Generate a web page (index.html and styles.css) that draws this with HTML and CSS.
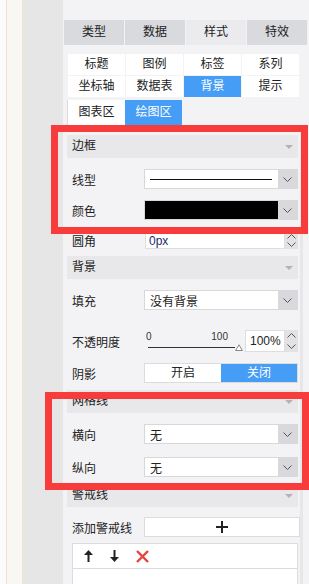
FILE: index.html
```html
<!DOCTYPE html>
<html lang="zh-CN">
<head>
    <meta charset="UTF-8">
    <meta name="viewport" content="width=device-width, initial-scale=1.0">
    <title>图表样式</title>
    <link rel="stylesheet" href="styles.css">
</head>
<body>

<div class="edge"></div>
<div class="rail"></div>
<div class="gutter"></div>

<div class="panel">
    <div class="tabs">
        <div class="tab">类型</div>
        <div class="tab">数据</div>
        <div class="tab active">样式</div>
        <div class="tab">特效</div>
    </div>

    <div class="subtabs">
        <div class="subtab">标题</div>
        <div class="subtab">图例</div>
        <div class="subtab">标签</div>
        <div class="subtab">系列</div>
        <div class="subtab">坐标轴</div>
        <div class="subtab">数据表</div>
        <div class="subtab active">背景</div>
        <div class="subtab">提示</div>
    </div>

    <div class="areas">
        <div class="area first">图表区</div>
        <div class="area active">绘图区</div>
    </div>

    <div class="content">
        <!-- 边框 -->
        <div class="head first">边框<span class="caret"></span></div>
        <div class="row">
            <div class="label">线型</div>
            <div class="select">
                <span class="value"><span class="line-sample"></span></span>
                <span class="drop"><svg width="9" height="5" viewBox="0 0 9 5"><polyline points="0.5,0.5 4.5,4.5 8.5,0.5" fill="none" stroke="#555" stroke-width="1"/></svg></span>
            </div>
        </div>
        <div class="row">
            <div class="label">颜色</div>
            <div class="select">
                <span class="value"><span class="swatch"></span></span>
                <span class="drop"><svg width="9" height="5" viewBox="0 0 9 5"><polyline points="0.5,0.5 4.5,4.5 8.5,0.5" fill="none" stroke="#555" stroke-width="1"/></svg></span>
            </div>
        </div>
        <div class="row small">
            <div class="label">圆角</div>
            <div class="number">
                <span class="num-value px">0px</span>
                <span class="spin">
                    <svg width="9" height="5" viewBox="0 0 9 5"><polyline points="0.5,4.5 4.5,0.5 8.5,4.5" fill="none" stroke="#555" stroke-width="1"/></svg>
                    <svg width="9" height="5" viewBox="0 0 9 5"><polyline points="0.5,0.5 4.5,4.5 8.5,0.5" fill="none" stroke="#555" stroke-width="1"/></svg>
                </span>
            </div>
        </div>

        <!-- 背景 -->
        <div class="head">背景<span class="caret"></span></div>
        <div class="row">
            <div class="label">填充</div>
            <div class="select">
                <span class="value">没有背景</span>
                <span class="drop"><svg width="9" height="5" viewBox="0 0 9 5"><polyline points="0.5,0.5 4.5,4.5 8.5,0.5" fill="none" stroke="#555" stroke-width="1"/></svg></span>
            </div>
        </div>
        <div class="row opacity">
            <div class="label">不透明度</div>
            <div class="slider">
                <div class="scale"><span>0</span><span>100</span></div>
                <div class="track">
                    <span class="track-line"></span>
                    <svg width="8" height="7" viewBox="0 0 8 7"><polygon points="4,0.8 7.4,6.5 0.6,6.5" fill="#fff" stroke="#888" stroke-width="1"/></svg>
                </div>
            </div>
            <div class="number">
                <span class="num-value">100%</span>
                <span class="spin">
                    <svg width="9" height="5" viewBox="0 0 9 5"><polyline points="0.5,4.5 4.5,0.5 8.5,4.5" fill="none" stroke="#555" stroke-width="1"/></svg>
                    <svg width="9" height="5" viewBox="0 0 9 5"><polyline points="0.5,0.5 4.5,4.5 8.5,0.5" fill="none" stroke="#555" stroke-width="1"/></svg>
                </span>
            </div>
        </div>
        <div class="row">
            <div class="label">阴影</div>
            <div class="toggle">
                <span class="opt">开启</span>
                <span class="opt on">关闭</span>
            </div>
        </div>

        <!-- 网格线 -->
        <div class="head">网格线<span class="caret"></span></div>
        <div class="row">
            <div class="label">横向</div>
            <div class="select">
                <span class="value">无</span>
                <span class="drop"><svg width="9" height="5" viewBox="0 0 9 5"><polyline points="0.5,0.5 4.5,4.5 8.5,0.5" fill="none" stroke="#555" stroke-width="1"/></svg></span>
            </div>
        </div>
        <div class="row wide">
            <div class="label">纵向</div>
            <div class="select">
                <span class="value">无</span>
                <span class="drop"><svg width="9" height="5" viewBox="0 0 9 5"><polyline points="0.5,0.5 4.5,4.5 8.5,0.5" fill="none" stroke="#555" stroke-width="1"/></svg></span>
            </div>
        </div>

        <!-- 警戒线 -->
        <div class="head">警戒线<span class="caret"></span></div>
        <div class="row add-row">
            <div class="label">添加警戒线</div>
            <div class="add-btn">
                <svg width="12" height="12" viewBox="0 0 12 12"><rect x="0" y="5" width="12" height="2" fill="#222"/><rect x="5" y="0" width="2" height="12" fill="#222"/></svg>
            </div>
        </div>
        <div class="list">
            <div class="list-tools">
                <svg width="9" height="12" viewBox="0 0 9 12"><polygon points="4.5,0 9,5 0,5" fill="#222"/><rect x="3.5" y="4" width="2" height="8" fill="#222"/></svg>
                <svg width="9" height="12" viewBox="0 0 9 12"><rect x="3.5" y="0" width="2" height="8" fill="#222"/><polygon points="4.5,12 9,7 0,7" fill="#222"/></svg>
                <svg width="13" height="13" viewBox="0 0 13 13"><line x1="1" y1="1" x2="12" y2="12" stroke="#e8433d" stroke-width="2.4"/><line x1="12" y1="1" x2="1" y2="12" stroke="#e8433d" stroke-width="2.4"/></svg>
            </div>
        </div>
    </div>
</div>

<!-- destaque das seções -->
<div class="mark mark-border"></div>
<div class="mark mark-grid"></div>

</body>
</html>
```

FILE: styles.css
```css
body {
    margin: 0;
    height: 584px;
    overflow: hidden;
    display: flex;
    position: relative;
    font-family: "Liberation Sans", "Noto Sans CJK SC", sans-serif;
    font-size: 12px;
    color: #222;
    background-color: #f3f3f5;
}
.edge {
    width: 6px;
    background: #fbfbfb;
}
.rail {
    width: 15px;
    background: #f8f7f3;
    border-left: 1px solid #eee3cf;
    border-right: 1px solid #eee3cf;
}
.gutter {
    width: 40px;
    background: #e6e6e6;
}
.panel {
    width: 246px;
    height: 584px;
    background: #f3f3f5;
    display: flex;
    flex-direction: column;
}

/* abas principais */
.tabs {
    display: flex;
    gap: 1px;
    width: 243px;
    margin: 20px 0 0 1px;
}
.tab {
    flex: 1;
    height: 25px;
    line-height: 25px;
    text-align: center;
    font-size: 12px;
    background: #d9dadd;
}
.tab.active {
    background: #ebebed;
}

.subtabs {
    display: grid;
    grid-template-columns: repeat(4, 57px);
    grid-auto-rows: 21px;
    gap: 1px;
    margin: 9px 0 0 5px;
}
.subtab {
    background: #fff;
    text-align: center;
    line-height: 21px;
}
.subtab.active {
    background: #459df5;
    color: #fff;
}

.areas {
    display: flex;
    margin: 3px 0 0 4px;
}
.area {
    width: 57px;
    height: 25px;
    line-height: 25px;
    text-align: center;
    background: #fff;
}
.area.first {
    border-left: 1px solid #dcdcdc;
}
.area.active {
    background: #459df5;
    color: #fff;
}

/* conteúdo */
.content {
    flex: 1;
    min-height: 0;
    margin-right: 6px;
    border-right: 3px solid #e7e7e9;
    padding: 0 2px 0 4px;
    display: flex;
    flex-direction: column;
}
.head {
    position: relative;
    height: 23px;
    line-height: 23px;
    padding-left: 5px;
    margin-top: 7px;
    background: #e8e8ea;
    flex-shrink: 0;
}
.head.first {
    margin-top: 10px;
}
.caret {
    position: absolute;
    right: 5px;
    top: 10px;
    border-left: 4px solid transparent;
    border-right: 4px solid transparent;
    border-top: 4px solid #b3b3b5;
}

.row {
    display: flex;
    align-items: center;
    height: 20px;
    margin-top: 11px;
    flex-shrink: 0;
}
.row.small {
    height: 17px;
    margin-top: 12px;
}
.row.opacity {
    height: 22px;
    margin-top: 20px;
}
.row.wide {
    margin-top: 13px;
}
.row.add-row {
    margin-top: 10px;
}
.label {
    width: 77px;
    padding-left: 5px;
    box-sizing: border-box;
    flex-shrink: 0;
}

.select {
    flex: 1;
    height: 20px;
    display: flex;
    box-sizing: border-box;
    border: 1px solid #d8d8d8;
    background: #fff;
}
.select .value {
    flex: 1;
    display: flex;
    align-items: center;
    padding-left: 5px;
    min-width: 0;
}
.drop {
    width: 19px;
    background: #d9d9dd;
    display: flex;
    align-items: center;
    justify-content: center;
}
.line-sample {
    flex: 1;
    height: 1px;
    margin-right: 6px;
    background: #111;
}
.select .value:has(.swatch) {
    padding: 0;
}
.swatch {
    flex: 1;
    align-self: stretch;
    background: #000;
}

.number {
    flex: 1;
    align-self: stretch;
    display: flex;
}
.num-value {
    flex: 1;
    display: flex;
    align-items: center;
    padding-left: 3px;
    background: #fff;
    border: 1px solid #dedede;
}
.num-value.px {
    color: #1d2c6b;
    margin-left: 1px;
}
.spin {
    width: 13px;
    background: #e2e2e4;
    display: flex;
    flex-direction: column;
    align-items: center;
    justify-content: space-around;
}

.slider {
    width: 99px;
    align-self: stretch;
    padding-top: 2px;
    margin-right: 2px;
}
.scale {
    display: flex;
    justify-content: space-between;
    padding: 0 15px 0 2px;
    font-size: 10px;
    line-height: 10px;
    color: #333;
}
.track {
    display: flex;
    align-items: center;
    height: 7px;
    margin-top: 2px;
    padding-left: 4px;
}
.track-line {
    flex: 1;
    height: 1px;
    background: #333;
}
.opacity .number {
    flex: 0 0 53px;
}
.opacity .num-value {
    padding-left: 4px;
    font-size: 12px;
}

.toggle {
    flex: 1;
    height: 20px;
    display: flex;
    box-sizing: border-box;
    border: 1px solid #dcdcdc;
    background: #fff;
}
.opt {
    flex: 1;
    text-align: center;
    line-height: 18px;
}
.opt.on {
    background: #459df5;
    color: #fff;
}

.add-btn {
    flex: 1;
    height: 20px;
    margin-right: -2px;
    box-sizing: border-box;
    border: 1px solid #dcdcdc;
    background: #fff;
    display: flex;
    align-items: center;
    justify-content: center;
}

.list {
    flex: 1;
    min-height: 0;
    margin: 6px 0 0 5px;
    border: 1px solid #dcdcdc;
    border-bottom: none;
    background: #fff;
}
.list-tools {
    height: 24px;
    border-bottom: 1px solid #dcdcdc;
    display: flex;
    align-items: center;
    gap: 17px;
    padding-left: 11px;
}

/* marcações vermelhas por cima */
.mark {
    position: absolute;
    border: 7px solid #f83b3b;
    box-sizing: border-box;
}
.mark-border {
    left: 51px;
    top: 125px;
    width: 257px;
    height: 109px;
}
.mark-grid {
    left: 45px;
    top: 392px;
    width: 264px;
    height: 98px;
    border-right: none;
}
.mark-grid::after {
    content: "";
    position: absolute;
    right: 0;
    top: -7px;
    bottom: -7px;
    width: 7px;
    background: #f83b3b;
}
```
